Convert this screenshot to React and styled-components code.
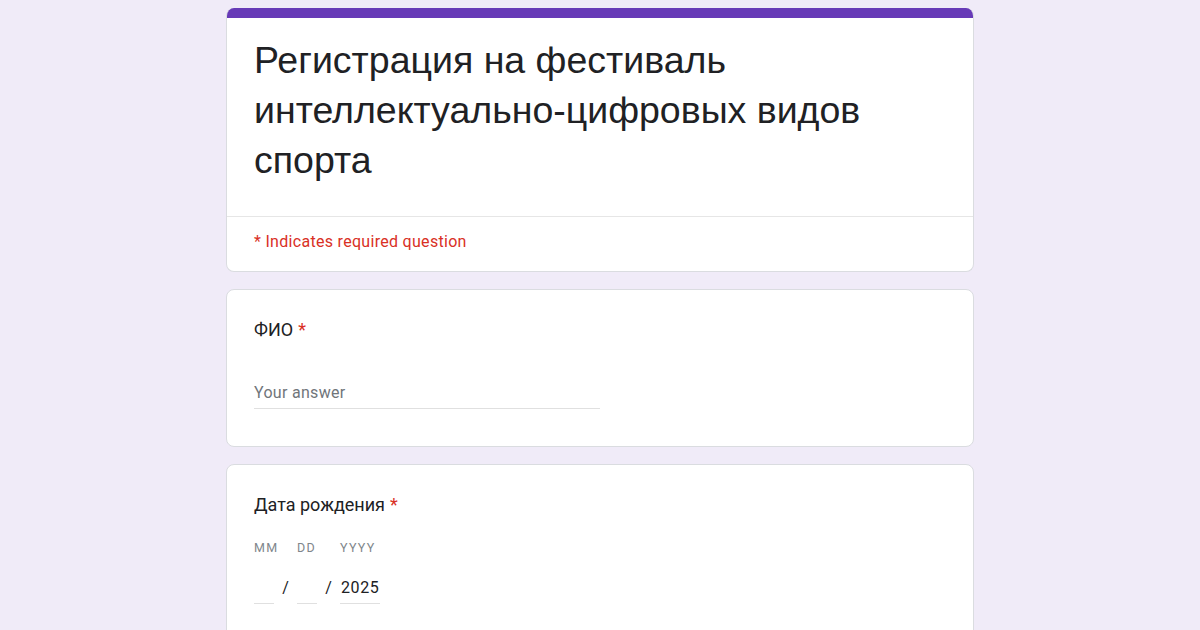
import React from "react";
import styled, { createGlobalStyle } from "styled-components";

const Global = createGlobalStyle`
  html, body { margin: 0; padding: 0; background: #f0ebf8; }
  body { font-family: Roboto, "Noto Sans", sans-serif; }
`;

const Page = styled.div`
  width: 1200px;
  height: 630px;
  overflow: hidden;
  background: #f0ebf8;
  display: flex;
  justify-content: center;
  padding-top: 8px;
  box-sizing: border-box;
`;

const Column = styled.div`
  width: 748px;
  display: flex;
  flex-direction: column;
  gap: 17px;
`;

const Card = styled.div`
  background: #fff;
  border: 1px solid #dadce0;
  border-radius: 8px;
  overflow: hidden;
  box-sizing: border-box;
  flex-shrink: 0;
`;

const HeaderCard = styled(Card)`
  border-top: none;
`;

const TopBar = styled.div`
  height: 10px;
  background: #673ab7;
`;

const TitleBlock = styled.div`
  padding: 17px 28px 31px 27px;
  border-bottom: 1px solid #e6e6e6;
`;

const Title = styled.h1`
  margin: 0;
  font-family: "Liberation Sans", Arial, sans-serif;
  font-weight: 400;
  font-size: 37.5px;
  line-height: 50px;
  color: #202124;
`;

const RequiredNote = styled.div`
  padding: 14px 28px 19px 27px;
  font-family: Roboto, sans-serif;
  font-size: 16px;
  line-height: 21px;
  color: #d93025;
  letter-spacing: 0.3px;
`;

const QuestionCard = styled(Card)`
  padding: 28px 28px ${(p) => p.$bottom || 24}px 27px;
`;

const Label = styled.div`
  font-family: Roboto, sans-serif;
  font-size: 18px;
  color: #202124;
  line-height: 24px;
`;

const Star = styled.span`
  color: #d93025;
  margin-left: 5px;
`;

const AnswerLine = styled.div`
  margin-top: 41px;
  width: 346px;
  border-bottom: 1px solid #e0e0e0;
  padding-bottom: 6px;
  font-family: Roboto, sans-serif;
  font-size: 16px;
  line-height: 19px;
  letter-spacing: 0.3px;
  color: #70757a;
`;

const DateGrid = styled.div`
  margin-top: 23px;
  display: flex;
  align-items: flex-end;
`;

const DatePart = styled.div`
  display: flex;
  flex-direction: column;
  width: ${(p) => p.$w}px;
`;

const PartLabel = styled.div`
  font-family: Roboto, sans-serif;
  font-size: 12.5px;
  line-height: 16px;
  letter-spacing: 1.3px;
  color: #80868b;
  height: 16px;
  white-space: nowrap;
`;

const PartValue = styled.div`
  margin-top: 21px;
  height: 22px;
  line-height: 22px;
  padding-bottom: 4px;
  border-bottom: 1px solid #e0e0e0;
  font-family: Roboto, sans-serif;
  font-size: 16px;
  color: #202124;
  letter-spacing: 0.6px;
  padding-left: 1px;
`;

const Slash = styled.div`
  width: 23px;
  text-align: center;
  font-family: Roboto, sans-serif;
  font-size: 16px;
  line-height: 22px;
  color: #202124;
  padding-bottom: 5px;
`;

export default function App() {
  return (
    <>
      <Global />
      <Page>
        <Column>
          <HeaderCard>
            <TopBar />
            <TitleBlock>
              <Title>
                Регистрация на фестиваль
                <br />
                интеллектуально-цифровых видов
                <br />
                спорта
              </Title>
            </TitleBlock>
            <RequiredNote>* Indicates required question</RequiredNote>
          </HeaderCard>

          <QuestionCard $bottom={37}>
            <Label>
              ФИО<Star>*</Star>
            </Label>
            <AnswerLine>Your answer</AnswerLine>
          </QuestionCard>

          <QuestionCard $bottom={60}>
            <Label>
              Дата рождения<Star>*</Star>
            </Label>
            <DateGrid>
              <DatePart $w={20}>
                <PartLabel>MM</PartLabel>
                <PartValue />
              </DatePart>
              <Slash>/</Slash>
              <DatePart $w={20}>
                <PartLabel>DD</PartLabel>
                <PartValue />
              </DatePart>
              <Slash>/</Slash>
              <DatePart $w={40}>
                <PartLabel>YYYY</PartLabel>
                <PartValue>2025</PartValue>
              </DatePart>
            </DateGrid>
          </QuestionCard>
        </Column>
      </Page>
    </>
  );
}
